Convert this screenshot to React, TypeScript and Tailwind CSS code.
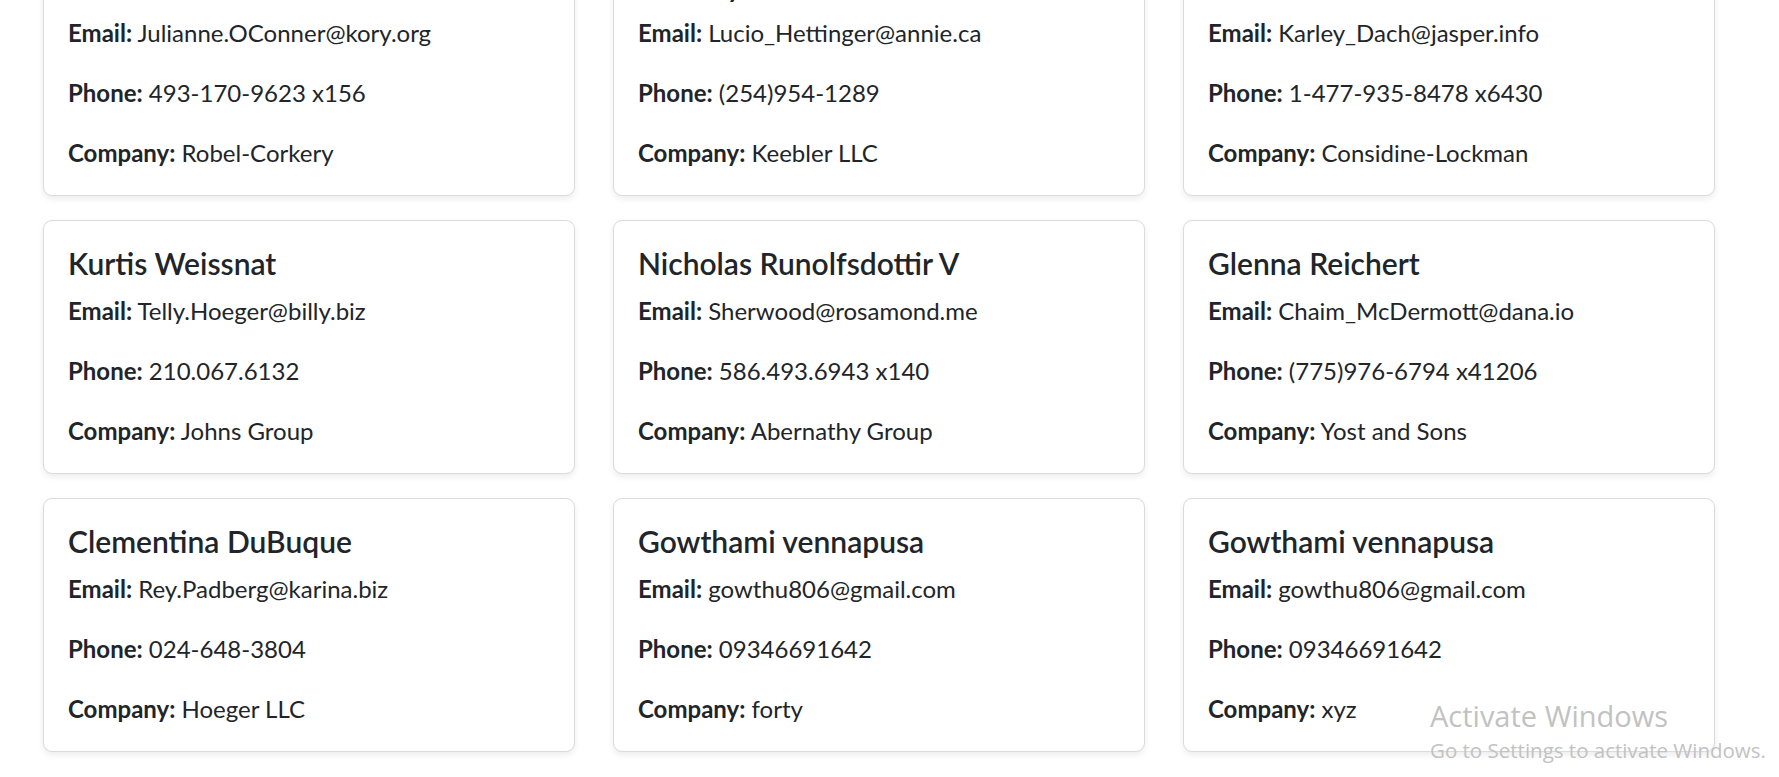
import React from 'react';

type User = {
    name: string;
    email: string;
    phone: string;
    company: string;
};

const users: User[] = [
    { name: 'Patricia Lebsack', email: 'Julianne.OConner@kory.org', phone: '493-170-9623 x156', company: 'Robel-Corkery' },
    { name: 'Chelsey Dietrich', email: 'Lucio_Hettinger@annie.ca', phone: '(254)954-1289', company: 'Keebler LLC' },
    { name: 'Mrs. Dennis Schulist', email: 'Karley_Dach@jasper.info', phone: '1-477-935-8478 x6430', company: 'Considine-Lockman' },
    { name: 'Kurtis Weissnat', email: 'Telly.Hoeger@billy.biz', phone: '210.067.6132', company: 'Johns Group' },
    { name: 'Nicholas Runolfsdottir V', email: 'Sherwood@rosamond.me', phone: '586.493.6943 x140', company: 'Abernathy Group' },
    { name: 'Glenna Reichert', email: 'Chaim_McDermott@dana.io', phone: '(775)976-6794 x41206', company: 'Yost and Sons' },
    { name: 'Clementina DuBuque', email: 'Rey.Padberg@karina.biz', phone: '024-648-3804', company: 'Hoeger LLC' },
    { name: 'Gowthami vennapusa', email: 'gowthu806@gmail.com', phone: '09346691642', company: 'forty' },
    { name: 'Gowthami vennapusa', email: 'gowthu806@gmail.com', phone: '09346691642', company: 'xyz' },
];

function UserCard({ user }: { user: User }) {
    return (
        <div className="rounded-[9px] border border-[#dadbdc] bg-white p-6 shadow-[0_3px_6px_rgba(0,0,0,0.075)]">
            <h5 className="mb-3 text-[30px] font-semibold leading-[36px]">{user.name}</h5>
            <p className="mb-6 text-[24px] leading-9">
                <strong className="font-bold">Email:</strong> {user.email}
            </p>
            <p className="mb-6 text-[24px] leading-9">
                <strong className="font-bold">Phone:</strong> {user.phone}
            </p>
            <p className="text-[24px] leading-9">
                <strong className="font-bold">Company:</strong> {user.company}
            </p>
        </div>
    );
}

export default function App() {
    return (
        <div className="relative h-[777px] overflow-hidden bg-white text-[#212529] font-['Lato','Open_Sans',sans-serif]">
            {/* page is scrolled: first row's titles sit above the fold */}
            <div className="-mt-[58px] grid grid-cols-[repeat(3,532px)] gap-x-[38px] gap-y-6 pl-[43px]">
                {users.map((user, i) => (
                    <UserCard key={i} user={user} />
                ))}
            </div>

            {/* windows watermark */}
            <div className="pointer-events-none absolute left-[1430px] top-[700px] whitespace-nowrap text-[#c2c2c2] font-['Open_Sans',sans-serif]">
                <p className="text-[29px] leading-[32px]">Activate Windows</p>
                <p className="text-[20.5px] leading-[36px]">Go to Settings to activate Windows.</p>
            </div>
        </div>
    );
}
